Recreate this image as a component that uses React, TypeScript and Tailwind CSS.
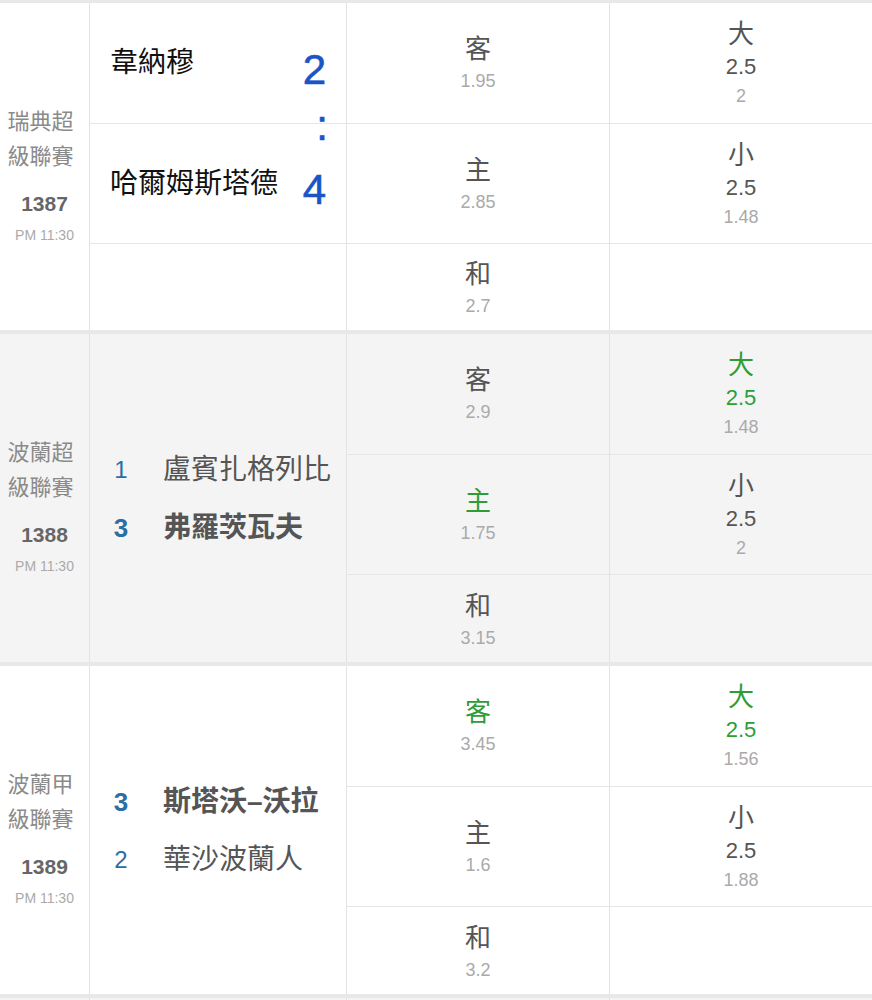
import React from 'react';

type Cell = {
  label: string;
  line?: string;
  price: string;
  hot?: boolean;
};

type Team = {
  rank?: string;
  name: string;
  bold?: boolean;
};

type Match = {
  league: [string, string];
  no: string;
  time: string;
  home: Team;
  away: Team;
  score?: [string, string];
  shaded?: boolean;
  result: Cell[];
  total: Cell[];
};

const matches: Match[] = [
  {
    league: ['瑞典超', '級聯賽'],
    no: '1387',
    time: 'PM 11:30',
    home: { name: '韋納穆' },
    away: { name: '哈爾姆斯塔德' },
    score: ['2', '4'],
    result: [
      { label: '客', price: '1.95' },
      { label: '主', price: '2.85' },
      { label: '和', price: '2.7' },
    ],
    total: [
      { label: '大', line: '2.5', price: '2' },
      { label: '小', line: '2.5', price: '1.48' },
    ],
  },
  {
    league: ['波蘭超', '級聯賽'],
    no: '1388',
    time: 'PM 11:30',
    home: { rank: '1', name: '盧賓扎格列比' },
    away: { rank: '3', name: '弗羅茨瓦夫', bold: true },
    shaded: true,
    result: [
      { label: '客', price: '2.9' },
      { label: '主', price: '1.75', hot: true },
      { label: '和', price: '3.15' },
    ],
    total: [
      { label: '大', line: '2.5', price: '1.48', hot: true },
      { label: '小', line: '2.5', price: '2' },
    ],
  },
  {
    league: ['波蘭甲', '級聯賽'],
    no: '1389',
    time: 'PM 11:30',
    home: { rank: '3', name: '斯塔沃–沃拉', bold: true },
    away: { rank: '2', name: '華沙波蘭人' },
    result: [
      { label: '客', price: '3.45', hot: true },
      { label: '主', price: '1.6' },
      { label: '和', price: '3.2' },
    ],
    total: [
      { label: '大', line: '2.5', price: '1.56', hot: true },
      { label: '小', line: '2.5', price: '1.88' },
    ],
  },
];

function OddsCell({ cell }: { cell?: Cell }) {
  if (!cell) return null;
  const tone = cell.hot ? 'text-[#2e9d37]' : 'text-[#555]';
  return (
    <div className="flex flex-col items-center">
      <div className={`text-[26px] leading-[36px] ${tone}`}>{cell.label}</div>
      {cell.line && (
        <div className={`text-[22px] leading-[30px] ${tone}`}>{cell.line}</div>
      )}
      <div className="text-[18px] leading-[28px] text-[#aaa]">{cell.price}</div>
    </div>
  );
}

function OddsColumn({ cells, last }: { cells: Cell[]; last?: boolean }) {
  return (
    <div
      className={`flex flex-col ${last ? 'flex-1' : 'w-[263px] border-r border-[#e3e3e3]'}`}
    >
      <div className="h-[121px] border-b border-[#e6e6e6] flex items-center justify-center">
        <OddsCell cell={cells[0]} />
      </div>
      <div className="h-[120px] border-b border-[#e6e6e6] flex items-center justify-center">
        <OddsCell cell={cells[1]} />
      </div>
      <div className="flex-1 flex items-center justify-center pt-[2px]">
        <OddsCell cell={cells[2]} />
      </div>
    </div>
  );
}

function TeamRow({ team }: { team: Team }) {
  return (
    <div className="h-[58px] flex items-center pl-[14px]">
      <span
        className={`w-[34px] text-center text-[#2b6ea3] ${
          team.bold ? 'text-[26px] font-bold' : 'text-[24px]'
        }`}
      >
        {team.rank}
      </span>
      <span
        className={`ml-[25px] text-[28px] text-[#555] ${team.bold ? 'font-bold' : ''}`}
      >
        {team.name}
      </span>
    </div>
  );
}

function MatchRow({ match, first }: { match: Match; first?: boolean }) {
  return (
    <div
      className={`flex border-[#e8e8e8] ${
        first ? 'h-[330px] border-t-[3px]' : 'h-[332px] border-t-4'
      } ${match.shaded ? 'bg-[#f4f4f4]' : 'bg-white'}`}
    >
      <div className="w-[90px] border-r border-[#e3e3e3] flex flex-col items-center justify-center pt-[17px]">
        <div className="pr-[8px] text-[22px] leading-[35px] text-[#8a8a8a]">{match.league[0]}</div>
        <div className="pr-[8px] text-[22px] leading-[35px] text-[#8a8a8a]">{match.league[1]}</div>
        <div className="mt-[16px] text-[21px] leading-[28px] font-semibold text-[#666]">
          {match.no}
        </div>
        <div className="mt-[5px] text-[14px] leading-[24px] text-[#aaa]">{match.time}</div>
      </div>

      {match.score ? (
        <div className="w-[257px] border-r border-[#e3e3e3] relative flex flex-col">
          <div className="h-[121px] border-b border-[#e6e6e6] flex items-center pl-[20px] text-[28px] text-[#111]">
            {match.home.name}
          </div>
          <div className="h-[120px] border-b border-[#e6e6e6] flex items-center pl-[20px] text-[28px] text-[#111]">
            {match.away.name}
          </div>
          <div className="flex-1" />
          <div className="absolute right-[20px] top-[37px] flex flex-col items-end text-[42px] text-[#1a55c8] [-webkit-text-stroke:0.6px_#1a55c8]">
            <span className="leading-[60px]">{match.score[0]}</span>
            <span className="leading-[60px] -mt-[4px] mb-[4px] -mr-[2px]">:</span>
            <span className="leading-[60px]">{match.score[1]}</span>
          </div>
        </div>
      ) : (
        <div className="w-[257px] border-r border-[#e3e3e3] flex flex-col justify-center pt-[2px]">
          <TeamRow team={match.home} />
          <TeamRow team={match.away} />
        </div>
      )}

      <OddsColumn cells={match.result} />
      <OddsColumn cells={match.total} last />
    </div>
  );
}

export default function App() {
  return (
    <div className="w-[872px] h-[1000px] overflow-hidden bg-white font-['Liberation_Sans','Noto_Sans_CJK_TC',sans-serif]">
      {matches.map((m, i) => (
        <MatchRow key={m.no} match={m} first={i === 0} />
      ))}
      <div className="flex h-[332px] border-t-4 border-[#e8e8e8] bg-[#f4f4f4]">
        <div className="w-[90px] border-r border-[#e3e3e3]" />
        <div className="w-[257px] border-r border-[#e3e3e3]" />
        <div className="w-[263px] border-r border-[#e3e3e3]" />
        <div className="flex-1" />
      </div>
    </div>
  );
}
